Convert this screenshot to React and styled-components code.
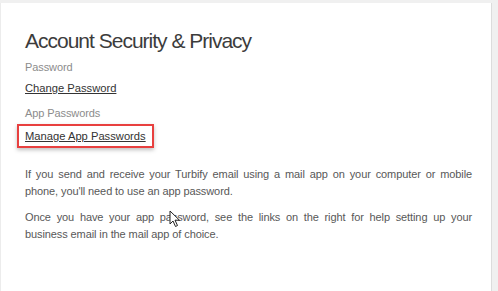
import React from "react";
import styled, { createGlobalStyle } from "styled-components";

const GlobalStyle = createGlobalStyle`
  body {
    margin: 0;
    background: #f0f0f0;
    font-family: "Liberation Sans", Arial, sans-serif;
  }
`;

const Page = styled.div`
  padding-top: 3px;
  padding-right: 6px;
  height: 288px;
  overflow: hidden;
`;

const Card = styled.section`
  position: relative;
  background: #ffffff;
  border-right: 1px solid #dcdcdc;
  border-left: 1px solid #ececec;
  height: 320px;
  padding: 25px 19px 0 24px;
  box-sizing: border-box;
`;

const Title = styled.h1`
  margin: 0 0 6px;
  font-size: 21px;
  line-height: 26px;
  font-weight: 400;
  letter-spacing: -1px;
  color: #3c3c3c;
`;

const Group = styled.div`
  margin-bottom: 10px;
`;

const Label = styled.div`
  font-size: 11px;
  line-height: 14px;
  color: #8c8c8c;
  letter-spacing: -0.1px;
  margin-bottom: 4px;
`;

const LinkText = styled.a`
  display: inline-block;
  font-size: 11.2px;
  line-height: 14px;
  color: #333333;
  text-decoration: underline;
  cursor: pointer;
`;

const Highlight = styled.div`
  display: flex;
  width: fit-content;
  margin: 4px 0 0 -8px;
  padding: 3px 6px;
  border: 2px solid #e8403f;
  box-shadow: 0 2px 4px rgba(0, 0, 0, 0.25);
`;

const Paragraph = styled.p`
  margin: 0 0 9px;
  font-size: 11px;
  line-height: 17px;
  color: #585858;
  text-align: justify;
  letter-spacing: -0.1px;
`;

const Text = styled.div`
  margin-top: 18px;
`;

const Cursor = styled.svg`
  position: absolute;
  left: 168px;
  top: 207px;
`;

export default function App() {
  return (
    <>
      <GlobalStyle />
      <Page>
        <Card>
          <Title>Account Security &amp; Privacy</Title>
          <Group>
            <Label>Password</Label>
            <LinkText>Change Password</LinkText>
          </Group>
          <Group>
            <Label>App Passwords</Label>
            <Highlight>
              <LinkText>Manage App Passwords</LinkText>
            </Highlight>
          </Group>
          <Text>
            <Paragraph>
              If you send and receive your Turbify email using a mail app on your computer or mobile
              phone, you'll need to use an app password.
            </Paragraph>
            <Paragraph>
              Once you have your app password, see the links on the right for help setting up your
              business email in the mail app of choice.
            </Paragraph>
          </Text>
          <Cursor width="12" height="18" viewBox="0 0 12 18">
            <path
              d="M1 1 L1 14 L4 11 L6.5 16.5 L8.5 15.5 L6 10.2 L10.5 10.2 Z"
              fill="#ffffff"
              stroke="#222222"
              strokeWidth="1"
              strokeLinejoin="round"
            />
          </Cursor>
        </Card>
      </Page>
    </>
  );
}
